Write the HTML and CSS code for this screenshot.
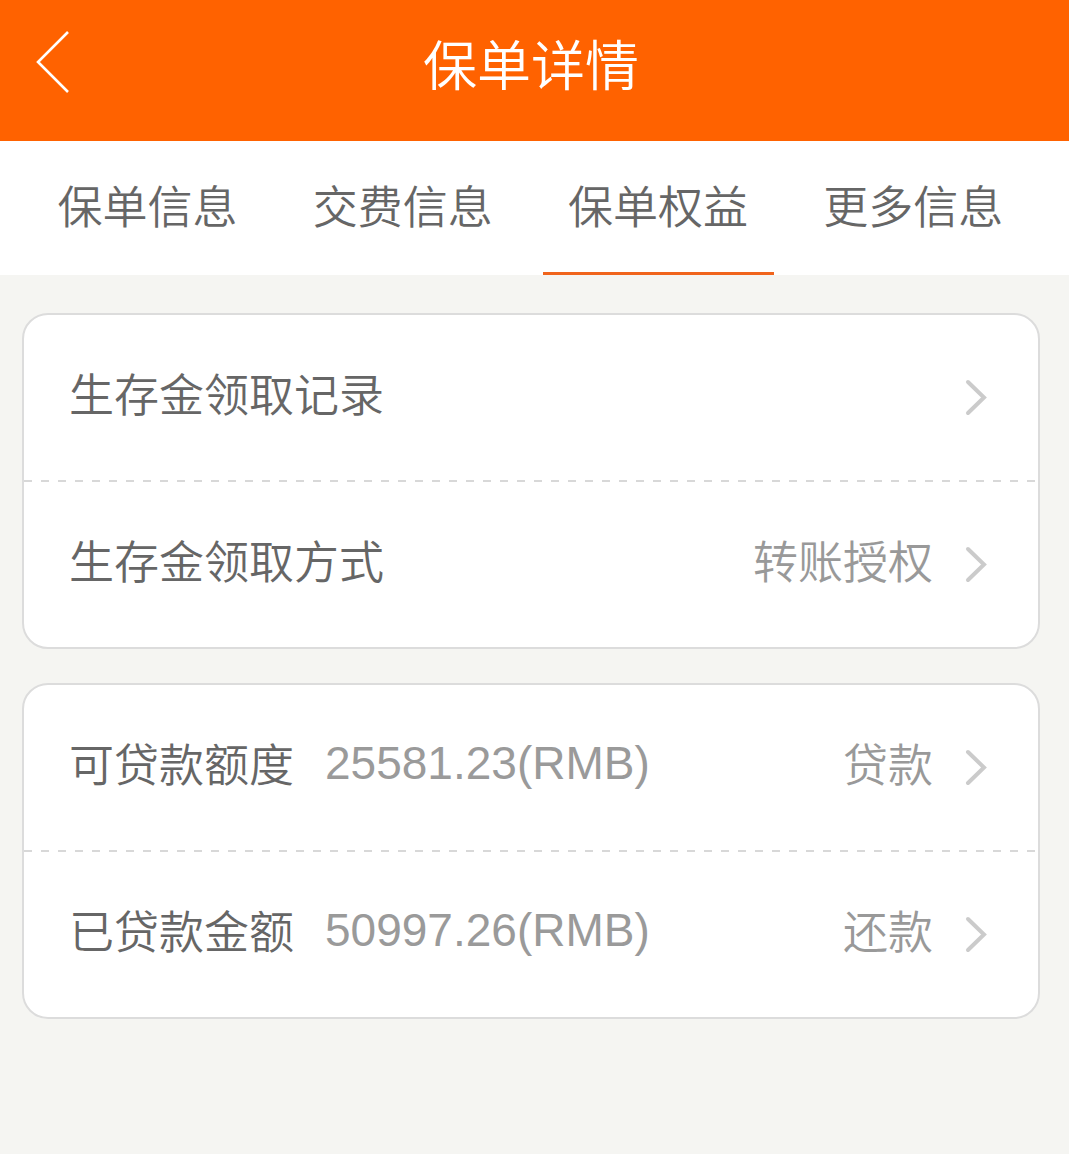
FILE: index.html
```html
<!DOCTYPE html>
<html lang="zh-CN">
<head>
  <meta charset="UTF-8">
  <meta name="viewport" content="width=device-width, initial-scale=1.0">
  <title>保单详情</title>
  <link rel="stylesheet" href="styles.css">
</head>
<body>
  <div id="app-bar">
    <div class="back">
      <svg width="34" height="64" viewBox="0 0 34 64">
        <polyline points="32,2 2,32 32,62" fill="none" stroke="#fff" stroke-width="2.6"/>
      </svg>
    </div>
    <div class="title">保单详情</div>
    <div></div>
  </div>

  <div id="tabs">
    <div class="tab">保单信息</div>
    <div class="tab">交费信息</div>
    <div class="tab active">保单权益</div>
    <div class="tab">更多信息</div>
  </div>

  <div id="content">
    <div class="card">
      <div class="row">
        <span class="label">生存金领取记录</span>
        <span class="arrow">
          <svg width="22" height="37" viewBox="0 0 22 37"><polyline points="3,3 19,18.5 3,34" fill="none" stroke="#cbcbcb" stroke-width="4" stroke-linecap="round"/></svg>
        </span>
      </div>
      <div class="divider"></div>
      <div class="row">
        <span class="label">生存金领取方式</span>
        <span class="value">转账授权</span>
        <span class="arrow">
          <svg width="22" height="37" viewBox="0 0 22 37"><polyline points="3,3 19,18.5 3,34" fill="none" stroke="#cbcbcb" stroke-width="4" stroke-linecap="round"/></svg>
        </span>
      </div>
    </div>

    <div class="card">
      <div class="row">
        <span class="label">可贷款额度</span>
        <span class="amount">25581.23(RMB)</span>
        <span class="value">贷款</span>
        <span class="arrow">
          <svg width="22" height="37" viewBox="0 0 22 37"><polyline points="3,3 19,18.5 3,34" fill="none" stroke="#cbcbcb" stroke-width="4" stroke-linecap="round"/></svg>
        </span>
      </div>
      <div class="divider"></div>
      <div class="row">
        <span class="label">已贷款金额</span>
        <span class="amount">50997.26(RMB)</span>
        <span class="value">还款</span>
        <span class="arrow">
          <svg width="22" height="37" viewBox="0 0 22 37"><polyline points="3,3 19,18.5 3,34" fill="none" stroke="#cbcbcb" stroke-width="4" stroke-linecap="round"/></svg>
        </span>
      </div>
    </div>
  </div>
</body>
</html>
```

FILE: styles.css
```css
body {
  margin: 0;
  min-height: 100vh;
  background-color: #f5f5f2;
  font-family: "Noto Sans CJK SC", sans-serif;
}
#app-bar {
  display: grid;
  grid-template-columns: 1fr auto 1fr;
  align-items: center;
  height: 141px;
  padding: 0 29px 0 22px;
  background-color: #ff6200;
  color: #fff;
}
.back {
  display: flex;
  align-items: center;
  padding-left: 14px;
  padding-bottom: 18px;
}
.back svg {
  display: block;
}
.title {
  font-size: 54px;
  font-weight: 350;
  line-height: 1;
  padding-bottom: 16px;
}
#tabs {
  display: flex;
  height: 134px;
  padding: 0 28px 0 20px;
  background-color: #fff;
}
.tab {
  flex: 1;
  display: flex;
  justify-content: center;
  align-items: center;
  margin: 0 12px;
  padding-bottom: 4px;
  border-bottom: 3px solid transparent;
  font-size: 45px;
  font-weight: 350;
  color: #666;
}
.tab.active {
  border-bottom-color: #f0641c;
}
#content {
  display: flex;
  flex-direction: column;
  gap: 34px;
  padding: 38px 29px 0 22px;
}
.card {
  background-color: #fff;
  border: 2px solid #dcdcdc;
  border-radius: 26px;
}
.row {
  display: flex;
  align-items: center;
  height: 165px;
  padding: 0 51px 0 45px;
  font-size: 45px;
  font-weight: 350;
}
.label,
.value,
.amount {
  padding-bottom: 10px;
}
.label {
  color: #666;
}
.amount {
  margin-left: 31px;
  font-family: "Liberation Sans", "Roboto", sans-serif;
  font-size: 46px;
  font-weight: 400;
  color: #9a9a9a;
}
.value {
  margin-left: auto;
  color: #999;
}
.arrow {
  display: flex;
  margin-left: 32px;
}
.label + .arrow {
  margin-left: auto;
}
.divider {
  height: 2px;
  background-image: repeating-linear-gradient(to right, #d8d8d8 0 8px, transparent 8px 17px);
}
```
